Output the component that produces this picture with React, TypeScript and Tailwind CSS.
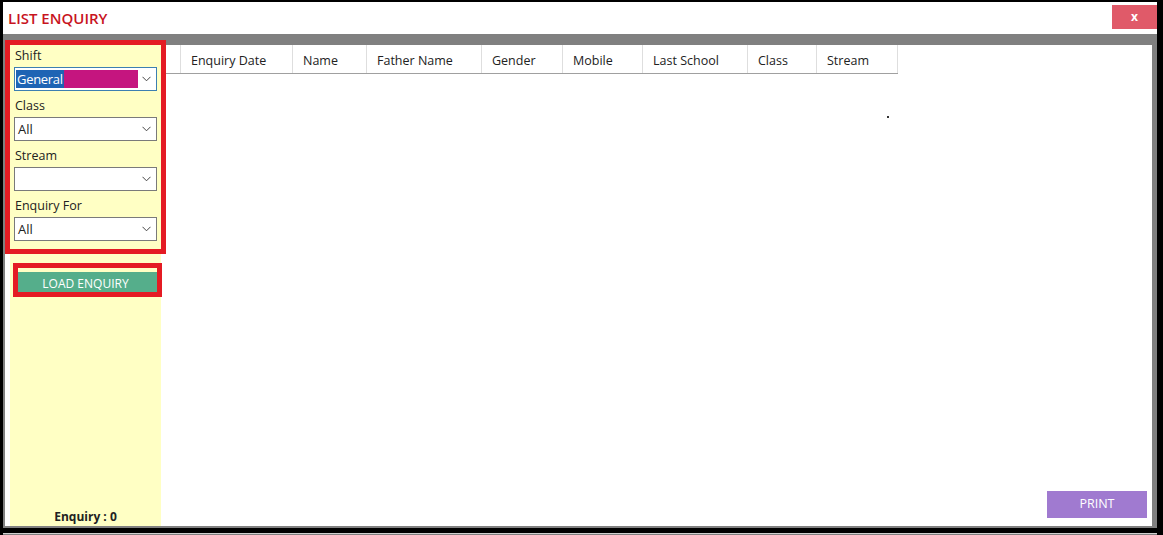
import React from 'react';

const font = { fontFamily: '"Open Sans", "Noto Sans", sans-serif' };

const Chevron = () => (
  <svg width="9" height="6" viewBox="0 0 9 6" className="shrink-0">
    <polyline points="0.5,0.8 4.5,4.8 8.5,0.8" fill="none" stroke="#444" strokeWidth="1" />
  </svg>
);

const Select: React.FC<{ value?: string; focused?: boolean }> = ({ value, focused }) => (
  <div
    className={`h-[24px] w-[143px] bg-white border flex items-center pl-[1px] pr-[5px] ${
      focused ? 'border-[#3c7fb1]' : 'border-[#7a7a7a]'
    }`}
  >
    <div className="flex-1 flex items-center text-[13px] text-[#222] leading-none">
      {focused ? (
        <div className="flex w-[122px] h-[18px]">
          <span className="bg-[#1e64b4] text-white h-full flex items-center pl-[1px] pr-[1px] tracking-[-0.3px]">
            {value}
          </span>
          <span className="bg-[#c5157f] h-full flex-1" />
        </div>
      ) : (
        <span className="pl-[2px]">{value}</span>
      )}
    </div>
    <Chevron />
  </div>
);

const columns = [
  { label: '', w: 'w-[20px]' },
  { label: 'Enquiry Date', w: 'w-[112px]' },
  { label: 'Name', w: 'w-[74px]' },
  { label: 'Father Name', w: 'w-[115px]' },
  { label: 'Gender', w: 'w-[81px]' },
  { label: 'Mobile', w: 'w-[80px]' },
  { label: 'Last School', w: 'w-[105px]' },
  { label: 'Class', w: 'w-[69px]' },
  { label: 'Stream', w: 'w-[81px]' },
];

export default function App() {
  return (
    <div className="relative w-[1163px] h-[535px] bg-black pt-[2px] pl-[3px] pr-[6px] flex flex-col" style={font}>
      {/* title bar */}
      <div className="h-[32px] bg-white flex items-start justify-between pl-[5px] pr-0 shrink-0">
        <div className="text-[15px] font-semibold text-[#c8141e] mt-[6px] leading-[20px]">LIST ENQUIRY</div>
        <button className="mt-[3px] w-[45px] h-[24px] bg-[#e05a69] text-white text-[12px] font-bold flex items-center justify-center">
          x
        </button>
      </div>

      {/* frame */}
      <div className="h-[494px] bg-[#808080] pt-[11px] pl-[2px] pr-[5px] pb-[2px] flex shrink-0">
        <div className="flex-1 bg-white flex pl-[5px]">
          {/* filter panel */}
          <div className="w-[151px] bg-[#ffffc4] flex flex-col pl-[4px] pt-[2px]">
            {[
              { label: 'Shift', value: 'General', focused: true },
              { label: 'Class', value: 'All' },
              { label: 'Stream', value: '' },
              { label: 'Enquiry For', value: 'All' },
            ].map((f) => (
              <div key={f.label} className="flex flex-col mb-[6px]">
                <div className="text-[12.5px] text-[#222] leading-[17px] pl-[1px] mb-[3px]">{f.label}</div>
                <Select value={f.value} focused={f.focused} />
              </div>
            ))}
            <button className="ml-[4px] mt-[25px] w-[139px] h-[23px] bg-[#55ae8b] text-white text-[12px] flex items-center justify-center pr-[4px]">
              LOAD ENQUIRY
            </button>
            <div className="mt-auto mb-0 text-center pr-[4px] text-[12px] font-bold text-[#222]">Enquiry : 0</div>
          </div>

          {/* grid */}
          <div className="relative flex-1 flex flex-col">
            <div className="flex h-[29px] border-b border-[#a0a0a0] w-[737px]">
              {columns.map((c, i) => (
                <div
                  key={i}
                  className={`${c.w} h-full border-r border-[#dedede] flex items-center pl-[10px] pt-[5px] text-[12.5px] text-[#222] whitespace-nowrap`}
                >
                  {c.label}
                </div>
              ))}
            </div>
            <div className="absolute left-[726px] top-[71px] w-[2px] h-[2px] bg-[#333]" />
            <button className="mt-auto self-end mr-[5px] mb-[8px] w-[100px] h-[27px] bg-[#a07ad0] text-white text-[12.5px] flex items-center justify-center">
              PRINT
            </button>
          </div>
        </div>
      </div>

      <div className="mt-[5px] h-[1px] bg-[#d0d0d0]" />
      <div className="flex-1 bg-[#808080]" />

      {/* highlight boxes */}
      <div className="absolute left-[5px] top-[40px] w-[161px] h-[214px] border-[5px] border-[#e41b23]" />
      <div className="absolute left-[13px] top-[263px] w-[149px] h-[34px] border-[5px] border-[#e41b23]" />
    </div>
  );
}
